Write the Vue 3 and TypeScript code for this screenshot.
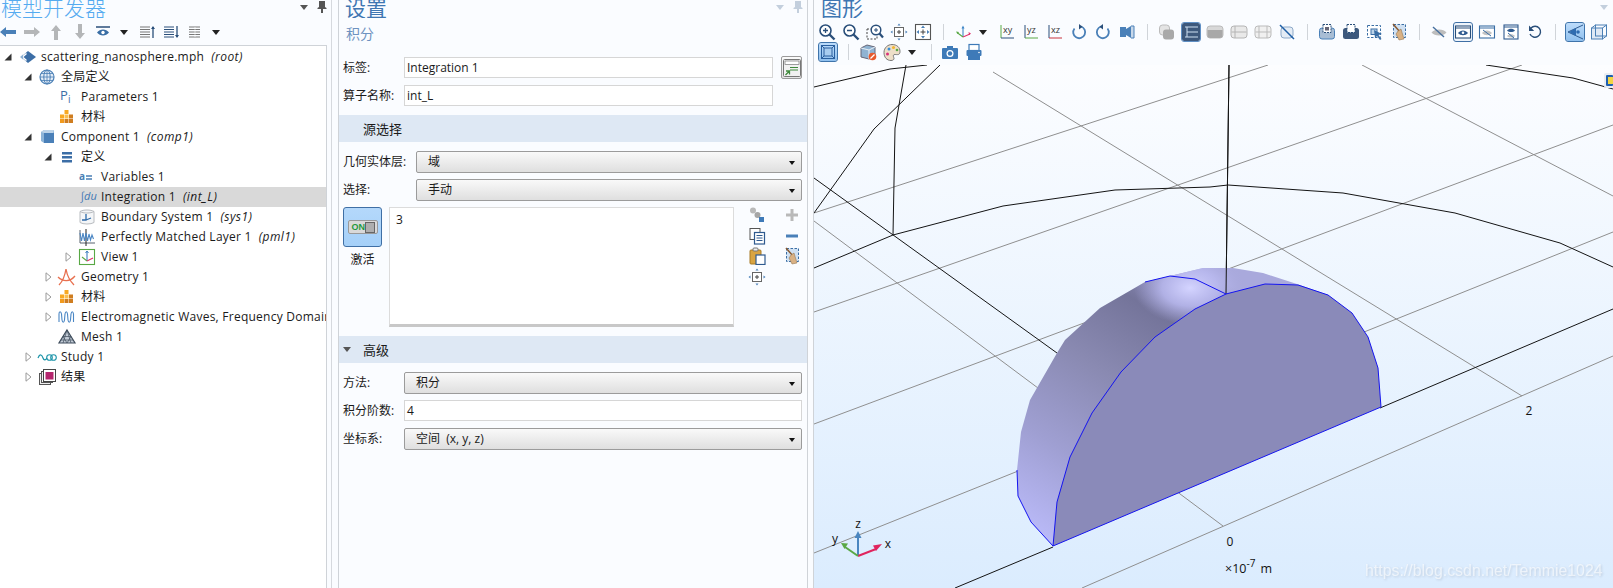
<script setup lang="ts">
type Row = { level: number; arrow?: 'open' | 'closed'; icon: string; label: string; tag?: string; selected?: boolean }
type Tool = { icon?: string; kind?: 'sep' | 'sepn' | 'caret'; on?: 'dark' | 'light' | 'frame' }

const svgFont = 'font-family="Open Sans,sans-serif"'
const navy = '#2a4f7a'
const mid = '#4a80b8'
const gray = '#b4b6b8'

const treeIcons: Record<string, string> = {
  root: '<path d="M11 4l8 6-8 6-7-6z" fill="#3c6ea6"/><path d="M9.500 6.500L5.500 10l4 3.500" fill="none" stroke="#fff" stroke-width="1.500"/><path d="M3 10l3-2.500v5z" fill="#8fb2d4"/>',
  globe: '<circle cx="10" cy="10" r="7" fill="#e4edf7" stroke="#4a7fb5" stroke-width="1.200"/><ellipse cx="10" cy="10" rx="3.200" ry="7" fill="none" stroke="#4a7fb5"/><path d="M3 10h14M4 6.500h12M4 13.500h12M10 3v14" stroke="#4a7fb5" stroke-width=".8"/>',
  pi: `<text x="3" y="13" font-size="13" fill="#3c6ea6" ${svgFont}>P</text><text x="11" y="16" font-size="10" fill="#3c6ea6" ${svgFont}>i</text>`,
  material: '<rect x="7.500" y="3" width="4" height="4" fill="#f7a823"/><rect x="3" y="7.500" width="4" height="4" fill="#f7a823"/><rect x="7.500" y="7.500" width="4" height="4" fill="#fbbf4f"/><rect x="12" y="7.500" width="4" height="4" fill="#cf7d20"/><rect x="3" y="12" width="4" height="4" fill="#f29a1c"/><rect x="7.500" y="12" width="4" height="4" fill="#cf7d20"/><rect x="12" y="12" width="4" height="4" fill="#cf7d20"/>',
  cube: '<path d="M4 5l3-2h10v13H7l-3-2z" fill="#8db4d8"/><path d="M7 6h10v10H7z" fill="#4a80b8"/><path d="M4 5l3-2h10l-1 3H7z" fill="#bcd3e8"/>',
  defs: '<path d="M5 5h10v2.400H5zM5 9h10v2.400H5zM5 13h10v2.400H5z" fill="#3c6ea6"/>',
  vars: `<text x="2" y="13" font-size="10" font-weight="700" fill="#4a7fb5" ${svgFont}>a</text><path d="M9 9h6M9 12h6" stroke="#4a7fb5" stroke-width="1.300"/>`,
  integ: `<text x="3" y="13" font-size="11" font-style="italic" fill="#3f78b4" ${svgFont}>∫du</text>`,
  boundary: '<path d="M3 4.500c3-2 11-2 14 0v11c-3 2-11 2-14 0z" fill="#f4f6f8" stroke="#b9bcc0"/><path d="M3 4.500c3 2 11 2 14 0" fill="none" stroke="#b9bcc0"/><path d="M9 7v6H5M9 13l5-2" fill="none" stroke="#2e6aa8" stroke-width="1.300"/>',
  pml: '<path d="M3 3v13h15" fill="none" stroke="#58626e"/><path d="M9 2v17" stroke="#222" stroke-width="1"/><path d="M3 6l1.500 8L6 6l1.500 8L9 6l1.500 8L12 7l1.500 6L15 8l1.500 4" fill="none" stroke="#4a86c4" stroke-width="1.100"/>',
  view: '<rect x="2.500" y="2.500" width="15" height="15" fill="#fff" stroke="#58a844" stroke-width="1.100"/><path d="M10 4v10" stroke="#3f7fc0" stroke-width="1.100"/><path d="M8.500 6L10 4l1.500 2" fill="none" stroke="#3f7fc0"/><path d="M10 14l6-3" stroke="#e2306c" stroke-width="1.100"/><path d="M10 14l-5-4" stroke="#58a844" stroke-width="1.100"/>',
  geom: '<path d="M2 18c4-4 6-10 7-16 1 6 4 12 8 16" fill="none" stroke="#e8704f" stroke-width="1.300"/><path d="M1 10c5 5 12 5 17-1" fill="none" stroke="#e8704f" stroke-width="1.300"/>',
  em: '<path d="M2 15V7c0-3 2-3 2.500 0l.5 6c.5 3 2 3 2.500 0l.5-6c.5-3 2-3 2.500 0l.5 6c.5 3 2 3 2.500 0l.5-6c.5-3 2-3 2.500 0v8" fill="none" stroke="#4a86c4" stroke-width="1.100"/>',
  mesh: '<path d="M10 3l8 13H2z" fill="#c2cbd6" stroke="#3f4d5c" stroke-width="1.200"/><path d="M6 9.500h8M4 13h12M10 3l-4 13M10 3l4 13M6 9.500L10 16l4-6.500" fill="none" stroke="#3f4d5c" stroke-width=".7"/>',
  study: '<path d="M1 11c2-5 4-3 5 0s3 2 4 0" fill="none" stroke="#1b93a8" stroke-width="1.200"/><circle cx="12.500" cy="10.500" r="2.800" fill="none" stroke="#1b93a8" stroke-width="1.100"/><circle cx="16.500" cy="10.500" r="2.800" fill="none" stroke="#1b93a8" stroke-width="1.100"/>',
  results: '<rect x="2.500" y="6.500" width="11" height="11" fill="#eee" stroke="#555"/><rect x="4.500" y="4.500" width="11" height="11" fill="#f6f6f6" stroke="#555"/><rect x="6.500" y="2.500" width="12" height="12" fill="#fff" stroke="#444"/><rect x="8.500" y="5" width="8" height="7.500" fill="#b5266e"/>',
}

const icons: Record<string, string> = {
  back: `<path d="M1 9l6-5v3h10v4H7v3z" fill="${mid}"/>`,
  forward: `<path d="M17 9l-6-5v3H1v4h10v3z" fill="${gray}"/>`,
  up: `<path d="M9 2l5 6h-3v9H7V8H4z" fill="${gray}"/>`,
  down: `<path d="M9 16l5-6h-3V1H7v9H4z" fill="${gray}"/>`,
  eyeBar: `<path d="M1 4h14" stroke="${navy}" stroke-width="1.400"/><path d="M2 9.500c3-4 9-4 12 0-3 4-9 4-12 0z" fill="#3a6ea5"/><circle cx="8" cy="9.500" r="1.700" fill="#fff"/>`,
  listUp: `<path d="M1 4h10M1 6.500h10M1 9h10M1 11.500h10M1 14h10" stroke="#777"/><path d="M14 15V4" stroke="${navy}" stroke-width="1.300"/><path d="M12 6l2-3 2 3z" fill="${navy}"/>`,
  listDown: `<path d="M1 4h10M1 6.500h10M1 9h10M1 11.500h10M1 14h10" stroke="${navy}"/><path d="M14 3v11" stroke="${navy}" stroke-width="1.300"/><path d="M12 12l2 3 2-3z" fill="${navy}"/>`,
  listAll: `<path d="M2 4h11M2 6.500h11M2 9h11M2 11.500h11M2 14h11" stroke="#777"/><path d="M8 4v10" stroke="#fff" stroke-width=".6"/>`,
  zoomIn: `<circle cx="7.500" cy="7.500" r="5.500" fill="#fff" stroke="${navy}" stroke-width="1.600"/><path d="M5 7.500h5M7.500 5v5" stroke="${navy}" stroke-width="1.300"/><path d="M11.500 11.500l5 5" stroke="${navy}" stroke-width="2.400"/>`,
  zoomOut: `<circle cx="7.500" cy="7.500" r="5.500" fill="#fff" stroke="${navy}" stroke-width="1.600"/><path d="M5 7.500h5" stroke="${navy}" stroke-width="1.300"/><path d="M11.500 11.500l5 5" stroke="${navy}" stroke-width="2.400"/>`,
  zoomBox: `<rect x="1" y="6" width="10" height="10" fill="none" stroke="#444" stroke-dasharray="2 1.500"/><circle cx="10" cy="7" r="4.800" fill="#fff" stroke="${navy}" stroke-width="1.500"/><path d="M8 7h4M10 5v4" stroke="${navy}"/><path d="M13.500 10.500l3.500 4" stroke="${navy}" stroke-width="2.200"/>`,
  extents: `<rect x="4.500" y="4.500" width="9" height="9" fill="#fff" stroke="#666"/><path d="M7 9h4M9 7v4" stroke="#444"/><path d="M9 .5l-1.500 2h3zM9 17.500l-1.500-2h3zM.5 9l2-1.500v3zM17.500 9l-2-1.500v3z" fill="${mid}"/>`,
  extents2: `<rect x="1.500" y="1.500" width="15" height="15" fill="#fff" stroke="#555" stroke-width="1.100"/><path d="M6.500 9h5M9 6.500v5" stroke="#444"/><path d="M9 2.500l-2 2.500h4zM9 15.500l-2-2.500h4zM2.500 9L5 7v4zM15.500 9L13 7v4z" fill="${mid}"/>`,
  axes: `<path d="M9 14V4" stroke="#3f86c6" stroke-width="1.100"/><path d="M7.500 5.500L9 2.500l1.500 3z" fill="#3f86c6"/><path d="M9 14l7-3" stroke="#e2306c" stroke-width="1.100"/><path d="M14.500 9l2.500 1.500-2 1.500z" fill="#e2306c"/><path d="M9 14l-6-4.500" stroke="#58a844" stroke-width="1.100"/><path d="M2 8.500l3 .5-1.500 2z" fill="#58a844"/>`,
  xy: `<path d="M3 2v13" stroke="#58a844"/><path d="M3 15h13" stroke="#2a4f7a"/><text x="5" y="10" font-size="9" fill="#333" ${svgFont}>xy</text>`,
  yz: `<path d="M3 2v13" stroke="#2a4f7a"/><path d="M3 15h13" stroke="#58a844"/><text x="5" y="10" font-size="9" fill="#333" ${svgFont}>yz</text>`,
  xz: `<path d="M3 2v13" stroke="#2a4f7a"/><path d="M3 15h13" stroke="#c8323c"/><text x="5" y="10" font-size="9" fill="#333" ${svgFont}>xz</text>`,
  rotR: `<path d="M11 3.500a6 6 0 1 1-6.500 2" fill="none" stroke="${mid}" stroke-width="1.800"/><path d="M9 1v5.500l3.500-2.800z" fill="${navy}"/>`,
  rotL: `<path d="M7 3.500a6 6 0 1 0 6.500 2" fill="none" stroke="${mid}" stroke-width="1.800"/><path d="M9 1v5.500L5.500 3.700z" fill="${navy}"/>`,
  speaker: `<rect x="2" y="4" width="6" height="10" fill="${mid}"/><path d="M8 6l5-3v12l-5-3z" fill="${mid}"/><path d="M13 3h3v12h-3" fill="#c8d8ea" stroke="${mid}"/>`,
  solid: `<rect x="1.500" y="2" width="10" height="10" rx="3" fill="#e4e4e4" stroke="#bbb"/><rect x="5" y="6.500" width="11" height="10" rx="3" fill="#a9a9a9"/>`,
  wireOn: `<path d="M3 4h13M3 14h13M5 9h11M5 4v10" fill="none" stroke="#cfe0f2" stroke-width="1"/>`,
  cylFull: `<rect x="1" y="3" width="16" height="12" rx="3" fill="#d8d8d8" stroke="#bbb"/><path d="M1.500 7h15v5c0 2-1 3-3 3h-9c-2 0-3-1-3-3z" fill="#a8a8a8"/>`,
  cylMid: `<rect x="1" y="3" width="16" height="12" rx="3" fill="#e9e9e9" stroke="#b4b4b4"/><path d="M1.500 9h15M5 3v12M13 3v0" stroke="#b4b4b4"/>`,
  cylEnds: `<rect x="1" y="3" width="16" height="12" rx="3" fill="#f0f0f0" stroke="#bbb"/><path d="M1.500 9h15M5 3v12M13 3v12" stroke="#bbb"/>`,
  cylOff: `<rect x="3" y="4" width="12" height="11" rx="3" fill="#e4ecf5" stroke="#8da9c8"/><path d="M2 2l14 14" stroke="#1f5fa6" stroke-width="1.500"/>`,
  boxSel: `<rect x="1.500" y="5" width="15" height="11" rx="2.500" fill="#a8bdd4" stroke="${mid}"/><rect x="5" y="1.500" width="8" height="8" fill="#fff" stroke="${navy}" stroke-dasharray="2 1"/><rect x="7" y="4" width="4" height="3.500" fill="#667"/>`,
  boxSelOn: `<rect x="1" y="5" width="16" height="11" rx="2.500" fill="#3d587c"/><rect x="5" y="1.500" width="8" height="8" fill="#fff" stroke="${navy}" stroke-dasharray="2 1"/>`,
  selArrow: `<rect x="1.500" y="2.500" width="13" height="12" fill="#fff" stroke="#3a6ea5" stroke-dasharray="2.500 1.500"/><rect x="5" y="6" width="6" height="5.500" fill="#bcd3e8" stroke="#3a6ea5"/><path d="M8 7l8 4-3.500 1 3 4-1.500 1-3-4-2 2z" fill="#3a6ea5"/>`,
  broom: `<rect x="3.500" y="1.500" width="12" height="13" fill="#cfe0f2" stroke="#3a6ea5" stroke-dasharray="2.500 1.500"/><path d="M3 1l7 8" stroke="#8a5a30" stroke-width="1.500"/><path d="M8 8l3-2 3 10-5 1-3-6z" fill="#d9b184" stroke="#8a6a44" stroke-width=".5"/>`,
  eyeOff: `<path d="M1.500 9.500c3-4 12-4 15 0-3 4-12 4-15 0z" fill="#bdbdbd"/><path d="M3 4l11 10" stroke="#466f9e" stroke-width="1.400"/>`,
  eyeWin: `<rect x="1.500" y="3" width="15" height="12" fill="#fff" stroke="${navy}" stroke-width="1.100"/><path d="M1.500 5h15" stroke="${navy}"/><path d="M4 10c2.500-3.500 7.500-3.500 10 0-2.500 3-7.500 3-10 0z" fill="#2f5a8f"/><circle cx="9" cy="9.800" r="1.300" fill="#fff"/>`,
  eyeWinOff: `<rect x="1.500" y="3" width="15" height="12" fill="#fff" stroke="#3a6ea5" stroke-width="1.100"/><path d="M1.500 5h15" stroke="#3a6ea5"/><path d="M4 10c2.500-3.500 7.500-3.500 10 0-2.500 3-7.500 3-10 0z" fill="#c4c4c4"/><path d="M5 7l8 6" stroke="#3a6ea5"/>`,
  eyeWinBoth: `<rect x="2" y="2" width="14" height="14" fill="#fff" stroke="#2f5a8f" stroke-width="1.100"/><path d="M2 4h14" stroke="#2f5a8f"/><path d="M5 7.500c2-2.500 6-2.500 8 0-2 2-6 2-8 0z" fill="#2f5a8f"/><path d="M5 13c2-2.500 6-2.500 8 0-2 2-6 2-8 0z" fill="#c4c4c4"/><path d="M6 10l6 5" stroke="#3a6ea5"/>`,
  undo: `<path d="M5 5a5.500 5.500 0 1 1-1 6" fill="none" stroke="${navy}" stroke-width="1.400"/><path d="M3 2.500V8h5.200z" fill="${navy}"/>`,
  persp: `<path d="M17 2L2 9l15 7" fill="none" stroke="#2f5a8f"/><path d="M3 9l7-4v8z" fill="#2f6cb0"/><circle cx="12" cy="9" r="1.800" fill="#2f6cb0"/>`,
  ortho: `<rect x="1.500" y="5" width="11" height="11" fill="#dfe9f5" stroke="#4a7fb5"/><rect x="5.500" y="2" width="11" height="11" fill="none" stroke="#4a7fb5"/><path d="M1.500 5l4-3M12.500 5l4-3M12.500 16l4-3" stroke="#4a7fb5"/>`,
  wireBox: `<rect x="2.500" y="2.500" width="13" height="13" fill="none" stroke="#2a5f9e"/><rect x="5" y="5" width="8" height="8" fill="#a8cdf0" stroke="#2a5f9e"/><path d="M2.500 2.500L5 5M15.500 2.500L13 5M2.500 15.500L5 13M15.500 15.500L13 13" stroke="#2a5f9e"/>`,
  noMat: `<path d="M2 5l6-3 8 2v9l-6 3-8-2z" fill="#8fb3d2" stroke="#667"/><path d="M2 5l8 2 6-3M10 7v9" fill="none" stroke="#e9eef4"/><circle cx="13.500" cy="13.500" r="3.800" fill="#e8592c"/><path d="M11.500 15.500l4-4" stroke="#fff" stroke-width="1.300"/>`,
  palette: `<path d="M9 1.500c5 0 8 3 8 7s-3 3-5 3c-3 0-1 3-1 4s-1 2-3 2c-4 0-7-3-7-8s4-8 8-8z" fill="#eedfc8" stroke="#777"/><circle cx="6" cy="6" r="1.500" fill="#3a8fd8"/><circle cx="10.500" cy="4.500" r="1.500" fill="#f2b430"/><circle cx="14" cy="7" r="1.300" fill="#58a844"/><circle cx="4.500" cy="11" r="1.500" fill="#d8327c"/>`,
  camera: `<rect x="1" y="5" width="16" height="11" rx="1" fill="#3e7ab8"/><rect x="6" y="3" width="6" height="3" fill="#3e7ab8"/><circle cx="9" cy="10.500" r="3.500" fill="#fff"/><circle cx="9" cy="10.500" r="2.200" fill="#3e7ab8"/>`,
  printer: `<rect x="4" y="1.500" width="10" height="6" fill="#fff" stroke="#3e7ab8" stroke-width="1.200"/><rect x="1.500" y="7" width="15" height="6" rx="1" fill="#3e7ab8"/><rect x="3" y="12" width="12" height="5" fill="#3e7ab8"/><circle cx="14" cy="9.500" r=".8" fill="#fff"/>`,
  linkGear: `<circle cx="5" cy="4.500" r="3" fill="#b9b9b9"/><circle cx="9.500" cy="9" r="3" fill="#a5a5a5"/><rect x="11" y="11" width="5" height="5" fill="#3e7ab8"/>`,
  copy: `<rect x="2" y="1.500" width="10" height="11" fill="#fff" stroke="#555"/><rect x="6.500" y="5.500" width="10" height="11.500" fill="#fff" stroke="#2f5a8f" stroke-width="1.200"/><path d="M8.500 8.500h6M8.500 11h6M8.500 13.500h6" stroke="#2f5a8f"/>`,
  paste: `<rect x="2" y="3" width="11" height="14" rx="1" fill="#d9a441" stroke="#a87a24"/><rect x="5" y="1" width="5" height="3" rx="1" fill="#eee" stroke="#777"/><rect x="8" y="8" width="9" height="9.500" fill="#fff" stroke="#2f5a8f" stroke-width="1.200"/>`,
  plus: `<path d="M9 3v12M3 9h12" stroke="#b9b9b9" stroke-width="3"/>`,
  minus: `<path d="M3 9h12" stroke="#4a80b8" stroke-width="3"/>`,
  pick: `<rect x=".5" y=".5" width="17" height="17" rx="1" fill="#f1f1f1" stroke="#777"/><rect x="2" y="2" width="14" height="3.500" fill="#fff" stroke="#777" stroke-width=".7"/><path d="M7 8.500h8M7 11h8" stroke="#3f8a3c"/><path d="M2.500 16l4-4M3 12h3.500v3.500" fill="none" stroke="#3f8a3c" stroke-width="1.300"/>`,
}

const treeTools: Tool[] = [
  { icon: 'back' }, { icon: 'forward' }, { icon: 'up' }, { icon: 'down' }, { icon: 'eyeBar' }, { kind: 'caret' },
  { icon: 'listUp' }, { icon: 'listDown' }, { icon: 'listAll' }, { kind: 'caret' },
]
const gfxRow1: Tool[] = [
  { icon: 'zoomIn' }, { icon: 'zoomOut' }, { icon: 'zoomBox' }, { icon: 'extents' }, { icon: 'extents2' }, { kind: 'sep' },
  { icon: 'axes' }, { kind: 'caret' }, { icon: 'xy' }, { icon: 'yz' }, { icon: 'xz' }, { icon: 'rotR' }, { icon: 'rotL' }, { icon: 'speaker' }, { kind: 'sep' },
  { icon: 'solid' }, { icon: 'wireOn', on: 'dark' }, { icon: 'cylFull' }, { icon: 'cylMid' }, { icon: 'cylEnds' }, { icon: 'cylOff' }, { kind: 'sep' },
  { icon: 'boxSel' }, { icon: 'boxSelOn' }, { icon: 'selArrow' }, { icon: 'broom' }, { kind: 'sep' },
  { icon: 'eyeOff' }, { icon: 'eyeWin', on: 'frame' }, { icon: 'eyeWinOff' }, { icon: 'eyeWinBoth' }, { icon: 'undo' }, { kind: 'sep' },
  { icon: 'persp', on: 'light' }, { icon: 'ortho' },
]
const gfxRow2: Tool[] = [
  { icon: 'wireBox', on: 'light' }, { kind: 'sep' }, { icon: 'noMat' }, { icon: 'palette' }, { kind: 'caret' }, { kind: 'sepn' }, { icon: 'camera' }, { icon: 'printer' },
]

const rows: Row[] = [
  { level: 0, arrow: 'open', icon: 'root', label: 'scattering_nanosphere.mph', tag: '(root)' },
  { level: 1, arrow: 'open', icon: 'globe', label: '全局定义' },
  { level: 2, icon: 'pi', label: 'Parameters 1' },
  { level: 2, icon: 'material', label: '材料' },
  { level: 1, arrow: 'open', icon: 'cube', label: 'Component 1', tag: '(comp1)' },
  { level: 2, arrow: 'open', icon: 'defs', label: '定义' },
  { level: 3, icon: 'vars', label: 'Variables 1' },
  { level: 3, icon: 'integ', label: 'Integration 1', tag: '(int_L)', selected: true },
  { level: 3, icon: 'boundary', label: 'Boundary System 1', tag: '(sys1)' },
  { level: 3, icon: 'pml', label: 'Perfectly Matched Layer 1', tag: '(pml1)' },
  { level: 3, arrow: 'closed', icon: 'view', label: 'View 1' },
  { level: 2, arrow: 'closed', icon: 'geom', label: 'Geometry 1' },
  { level: 2, arrow: 'closed', icon: 'material', label: '材料' },
  { level: 2, arrow: 'closed', icon: 'em', label: 'Electromagnetic Waves, Frequency Domain' },
  { level: 2, icon: 'mesh', label: 'Mesh 1' },
  { level: 1, arrow: 'closed', icon: 'study', label: 'Study 1' },
  { level: 1, arrow: 'closed', icon: 'results', label: '结果' },
]

const sideIcons = ['linkGear', 'plus', 'copy', 'minus', 'paste', 'broom', 'extents', '']

const grayLines = [
  '814,213 1268,65', '814,312 1522,65', '814,424 1613,125', '814,553 1613,232', '1082,588 1613,356',
  '993,72 1522,396', '1362,65 1613,196', '814,221 1223,526',
]
const blackLines = [
  '814,87 890,69 927,65', '906,65 895,128 893,235', '940,65 874,129 814,213', '814,178 1057,353',
  '955,588 1053,547', '1380,408 1613,309', '814,268 893,235 1003,206 1115,190 1210,187 1228,185 1343,193 1455,213 1560,243 1613,267',
  '1486,65 1573,78 1613,89', '1229,65 1226,294',
]
const backShape = '1053,546 1031,522 1018,496 1017,470 1021,432 1030,400 1057,353 1065,340 1100,308 1145,282 1170,276 1203,268 1233,268 1263,273 1300,285 1328,295 1226,294'
const frontFace = '1053,546 1057,502 1070,457 1092,413 1121,372 1155,337 1195,309 1226,294 1265,284 1298,285 1328,295 1352,313 1368,337 1378,368 1381,407'
</script>

<template>
  <div class="app">
    <section class="panel tree-panel">
      <header class="head">
        <h1 class="title title-light">模型开发器</h1>
        <span class="pane-caret"></span>
        <svg class="pin" width="10" height="12" viewBox="0 0 10 12"><path d="M2 0h6v6l1.500 1v1H6v4H4V8H.5V7L2 6z" fill="#555" /></svg>
      </header>
      <div class="toolbar">
        <template v-for="(t, i) in treeTools" :key="i">
          <span v-if="t.kind === 'caret'" class="tool-caret"><i></i></span>
          <span v-else class="tool"><svg width="18" height="18" viewBox="0 0 18 18" v-html="icons[t.icon!]"></svg></span>
        </template>
      </div>
      <div class="tree">
        <div v-for="r in rows" :key="r.label + r.level + r.icon" class="row" :class="{ selected: r.selected }" :style="{ paddingLeft: r.level * 20 + 'px' }">
          <span class="arrow">
            <svg v-if="r.arrow === 'open'" width="8" height="8" viewBox="0 0 8 8"><path d="M7.500 .5v7H.5z" fill="#333" /></svg>
            <svg v-else-if="r.arrow === 'closed'" width="7" height="10" viewBox="0 0 7 10"><path d="M1 .8l5 4.200-5 4.200z" fill="#fff" stroke="#999" /></svg>
          </span>
          <svg class="node-icon" width="20" height="20" viewBox="0 0 20 20" v-html="treeIcons[r.icon]"></svg>
          <span class="label">{{ r.label }}</span>
          <em v-if="r.tag" class="tag">{{ r.tag }}</em>
        </div>
      </div>
    </section>

    <section class="panel settings">
      <header class="head">
        <h1 class="title">设置</h1>
        <span class="pane-caret faint"></span>
        <svg class="pin" width="10" height="12" viewBox="0 0 10 12"><path d="M2 0h6v6l1.500 1v1H6v4H4V8H.5V7L2 6z" fill="#c3cfdd" /></svg>
      </header>
      <div class="subtitle">积分</div>

      <div class="form-row first">
        <label class="lbl">标签:</label>
        <div class="input">Integration 1</div>
        <button class="pick"><svg width="18" height="18" viewBox="0 0 18 18" v-html="icons.pick"></svg></button>
      </div>
      <div class="form-row name-row">
        <label class="lbl">算子名称:</label>
        <div class="input">int_L</div>
      </div>

      <div class="section">源选择</div>

      <div class="form-row wide-label">
        <label class="lbl">几何实体层:</label>
        <div class="select"><span>域</span><i></i></div>
      </div>
      <div class="form-row wide-label">
        <label class="lbl">选择:</label>
        <div class="select"><span>手动</span><i></i></div>
      </div>

      <div class="selection">
        <div class="activate">
          <button class="toggle">
            <span class="switch"><b>ON</b><i></i></span>
          </button>
          <span class="activate-label">激活</span>
        </div>
        <div class="listbox">3</div>
        <div class="side-icons">
          <template v-for="(n, i) in sideIcons" :key="i">
            <svg v-if="n" width="18" height="18" viewBox="0 0 18 18" v-html="icons[n]"></svg>
            <span v-else></span>
          </template>
        </div>
      </div>

      <div class="section open"><i class="section-caret"></i>高级</div>

      <div class="form-row">
        <label class="lbl">方法:</label>
        <div class="select"><span>积分</span><i></i></div>
      </div>
      <div class="form-row">
        <label class="lbl">积分阶数:</label>
        <div class="input">4</div>
      </div>
      <div class="form-row">
        <label class="lbl">坐标系:</label>
        <div class="select"><span>空间&nbsp;&nbsp;(x, y, z)</span><i></i></div>
      </div>
    </section>

    <section class="panel graphics">
      <header class="head">
        <h1 class="title">图形</h1>
        <span class="pane-caret faint end"></span>
      </header>
      <div class="gfx-bar">
        <template v-for="(t, i) in gfxRow1" :key="i">
          <span v-if="t.kind === 'sep'" class="sep"><i></i></span>
          <span v-else-if="t.kind === 'caret'" class="tool-caret"><i></i></span>
          <span v-else class="tool"><svg :class="t.on" width="18" height="18" viewBox="0 0 18 18" v-html="icons[t.icon!]"></svg></span>
        </template>
      </div>
      <div class="gfx-bar second">
        <template v-for="(t, i) in gfxRow2" :key="i">
          <span v-if="t.kind === 'sep'" class="sep"><i></i></span>
          <span v-else-if="t.kind === 'sepn'" class="sep narrow"><i></i></span>
          <span v-else-if="t.kind === 'caret'" class="tool-caret"><i></i></span>
          <span v-else class="tool"><svg :class="t.on" width="18" height="18" viewBox="0 0 18 18" v-html="icons[t.icon!]"></svg></span>
        </template>
      </div>
      <svg class="scene" viewBox="814 65 799 523" width="799" height="523">
        <defs>
          <linearGradient id="shell" gradientUnits="userSpaceOnUse" x1="1040" y1="535" x2="1205" y2="270">
            <stop offset="0" stop-color="#b9b9f7" />
            <stop offset=".27" stop-color="#9f9fd2" />
            <stop offset=".55" stop-color="#8a8ab2" />
            <stop offset=".8" stop-color="#74749a" />
            <stop offset=".92" stop-color="#9090c0" />
            <stop offset="1" stop-color="#a9a9dc" />
          </linearGradient>
          <radialGradient id="glint" gradientUnits="userSpaceOnUse" cx="1190" cy="288" r="56" gradientTransform="translate(1190 288) scale(1 .65) translate(-1190 -288)">
            <stop offset="0" stop-color="#d4d4ff" />
            <stop offset=".5" stop-color="#bcbcf2" stop-opacity=".8" />
            <stop offset="1" stop-color="#a9a9dc" stop-opacity="0" />
          </radialGradient>
        </defs>
        <polyline v-for="p in grayLines" :key="p" :points="p" class="grid-line" />
        <polyline v-for="p in blackLines" :key="p" :points="p" class="axis-line" />
        <polygon :points="backShape" fill="url(#shell)" />
        <polygon :points="backShape" fill="url(#glint)" />
        <polygon :points="frontFace" fill="#8a8ab9" />
        <polyline points="1226,294 1229,65" class="axis-line" />
        <polyline points="1053,546 1031,522 1018,496 1017,470" class="edge" />
        <polyline points="1145,282 1170,276 1195,279 1226,294" class="edge" />
        <polygon :points="frontFace" class="edge" />
        <text x="1230" y="546" class="scene-text" text-anchor="middle">0</text>
        <text x="1529" y="415" class="scene-text" text-anchor="middle">2</text>
        <text x="1225" y="573" class="scene-text unit">×10<tspan dy="-6" font-size="10">-7</tspan><tspan dy="6" dx="5">m</tspan></text>
        <g class="triad">
          <path d="M858 556V536" stroke="#4a86c0" stroke-width="2" />
          <path d="M854.500 538l3.500-7 3.500 7z" fill="#4a86c0" />
          <path d="M858 556l18-7" stroke="#e0245e" stroke-width="2" />
          <path d="M873 545.500l9-1.500-6 7z" fill="#e0245e" />
          <path d="M858 556l-13-9" stroke="#5aa845" stroke-width="2" />
          <path d="M841 543l7 .5-3.500 5.500z" fill="#5aa845" />
          <text x="858" y="528" class="scene-text" text-anchor="middle">z</text>
          <text x="888" y="548" class="scene-text" text-anchor="middle">x</text>
          <text x="835" y="543" class="scene-text" text-anchor="middle">y</text>
        </g>
        <rect x="1604" y="73" width="9" height="15" rx="2" fill="#e9edf2" />
        <rect x="1606" y="75" width="7" height="11" rx="1" fill="#1f5fb0" />
        <rect x="1608" y="77" width="5" height="7" fill="#f2d544" />
        <text x="1365" y="576" class="watermark">https://blog.csdn.net/Temmie1024</text>
      </svg>
    </section>
  </div>
</template>

<style>
html, body { margin: 0; padding: 0; background: #fafcff; }
</style>

<style scoped>
.app {
  display: flex;
  width: 1613px;
  height: 588px;
  overflow: hidden;
  background: #fafcff;
  color: #1a1a1a;
  font: 12px/20px "Open Sans", "Noto Sans CJK SC", sans-serif;
}
.panel { display: flex; flex-direction: column; box-sizing: border-box; height: 588px; }
.tree-panel { width: 332px; border-right: 1px solid #d6d9de; margin-right: 6px; }
.settings { width: 470px; border-left: 1px solid #cfd3d8; border-right: 1px solid #cfd3d8; margin-right: 5px; }
.graphics { flex: 1; border-left: 1px solid #cfd3d8; min-width: 0; }

.head { display: flex; align-items: flex-start; height: 18px; overflow: hidden; flex: none; }
.title { margin: -3px auto 0 1px; font: 400 21px/20px "Noto Sans CJK SC", sans-serif; color: #3f76b2; white-space: nowrap; }
.title-light { color: #55abf0; font-weight: 300; }
.settings .title { margin-left: 6px; }
.graphics .title { margin-left: 7px; }
.pane-caret { width: 0; height: 0; margin: 5px 9px 0 0; border: 4px solid transparent; border-top: 5px solid #555; }
.pane-caret.faint { border-top-color: #c3cfdd; }
.pane-caret.end { margin-right: 5px; }
.pin { margin: 1px 4px 0 0; }

.toolbar, .gfx-bar { display: flex; align-items: center; height: 20px; flex: none; }
.toolbar { margin: 4px 0 3px -4px; }
.gfx-bar { margin-top: 4px; padding-left: 1px; }
.gfx-bar.second { margin-top: 0; padding-left: 2px; margin-bottom: 3px; }
.tool { display: flex; justify-content: center; align-items: center; width: 24px; height: 20px; flex: none; }
.tool svg { box-sizing: border-box; border-radius: 2px; }
.tool svg.dark { background: #3d587c; outline: 1px solid #5f8fc4; }
.tool svg.light { background: linear-gradient(#bcdcfb, #8fc0ee); outline: 1px solid #3f74ab; }
.tool svg.frame { background: #eef4fb; outline: 1.500px solid #3f6fa5; }
.tool-caret { display: flex; align-items: center; width: 20px; flex: none; padding-left: 4px; box-sizing: border-box; }
.tool-caret i { width: 0; height: 0; border: 4px solid transparent; border-top: 5px solid #222; margin-top: 4px; }
.sep { display: flex; justify-content: center; width: 16px; flex: none; }
.sep.narrow { width: 14px; }
.sep i { width: 1px; height: 16px; background: #d0d4d9; }

.tree { flex: 1; width: 327px; box-sizing: border-box; background: #fff; border-top: 1px solid #cfd3d8; border-right: 1px solid #cfd3d8; padding-top: 1px; overflow: hidden; }
.row { display: flex; align-items: center; height: 20px; white-space: nowrap; box-sizing: border-box; }
.row.selected { background: #d9d9d9; }
.arrow { display: flex; justify-content: center; align-items: center; width: 16px; flex: none; }
.node-icon { width: 20px; margin: 0 4px 0 1px; flex: none; }
.label { letter-spacing: .25px; }
.tag { margin-left: 7px; letter-spacing: .45px; }

.subtitle { margin: 6px 0 0 7px; font-size: 14px; line-height: 20px; color: #6e92c0; }
.form-row { display: grid; grid-template-columns: 61px 1fr; align-items: start; height: 22px; margin: 6px 5px 0 4px; white-space: nowrap; }
.form-row.first { grid-template-columns: 61px 1fr 21px; margin-top: 13px; }
.form-row.first .input { margin-right: 8px; }
.form-row.name-row { margin-right: 34px; }
.form-row.wide-label { grid-template-columns: 73px 1fr; }
.lbl { line-height: 22px; }
.input { box-sizing: border-box; height: 21px; line-height: 19px; padding-left: 2px; background: #fff; border: 1px solid #d6d6d6; }
.pick { display: flex; justify-content: center; align-items: center; box-sizing: border-box; width: 21px; height: 23px; padding: 0; margin: -1px 0 0; background: linear-gradient(#fbfbfb, #e4e4e4); border: 1px solid #9a9a9a; border-radius: 2px; }
.select { display: flex; justify-content: space-between; align-items: center; box-sizing: border-box; height: 22px; padding: 0 6px 0 11px; background: linear-gradient(#f9f9f9, #dfdfdf); border: 1px solid #9b9b9b; border-radius: 2px; }
.select i { width: 0; height: 0; border: 3.500px solid transparent; border-top: 4px solid #111; margin-top: 4px; }
.section { display: flex; align-items: center; height: 27px; margin-top: 8px; padding-left: 24px; background: #dee8f4; font-size: 13px; }
.section + .form-row { margin-top: 9px; }
.section.open { margin-top: 9px; padding-left: 4px; }
.section-caret { width: 0; height: 0; border: 4px solid transparent; border-top: 5px solid #555; margin: 4px 12px 0 0; }

.selection { display: flex; align-items: flex-start; height: 120px; margin: 6px 0 0 4px; }
.activate { display: flex; flex-direction: column; align-items: center; width: 39px; flex: none; margin-right: 7px; }
.toggle { display: flex; align-items: center; justify-content: center; box-sizing: border-box; width: 39px; height: 40px; padding: 0; background: linear-gradient(#b4d8fb, #a5d0f8); border: 1px solid #3f6fa5; border-radius: 3px; }
.switch { display: flex; align-items: center; justify-content: space-between; box-sizing: border-box; width: 30px; height: 14px; padding: 0 2px 0 3px; background: #d9d9d9; border: 1px solid #999; border-radius: 2px; }
.switch b { font: 700 9px/10px "Liberation Sans", sans-serif; color: #1f9a3f; }
.switch i { width: 9px; height: 9px; background: #aeaeae; border: 1px solid #666; }
.activate-label { margin-top: 3px; line-height: 20px; }
.listbox { box-sizing: border-box; width: 345px; height: 120px; padding: 2px 0 0 6px; background: #fff; border: 1px solid #dcdcdc; border-bottom: 3px solid #c8c8c8; line-height: 20px; }
.side-icons { display: grid; grid-template-columns: 24px 24px; grid-auto-rows: 20.5px; column-gap: 11px; justify-items: center; align-items: center; margin: -2px 0 0 11px; }

.scene { display: block; background: linear-gradient(#fcfdff, #dbecfe); }
.grid-line { fill: none; stroke: #8f8f8f; stroke-width: 1; }
.axis-line { fill: none; stroke: #141414; stroke-width: 1; }
.edge { fill: none; stroke: #1414f0; stroke-width: 1; }
.scene-text { font: 12px "Open Sans", sans-serif; fill: #111; }
.unit { font-size: 12.500px; }
.watermark { font: 15.900px "Liberation Sans", sans-serif; fill: #fff; fill-opacity: .62; filter: drop-shadow(1px 1px 1px rgba(120, 130, 150, .45)); }
</style>
